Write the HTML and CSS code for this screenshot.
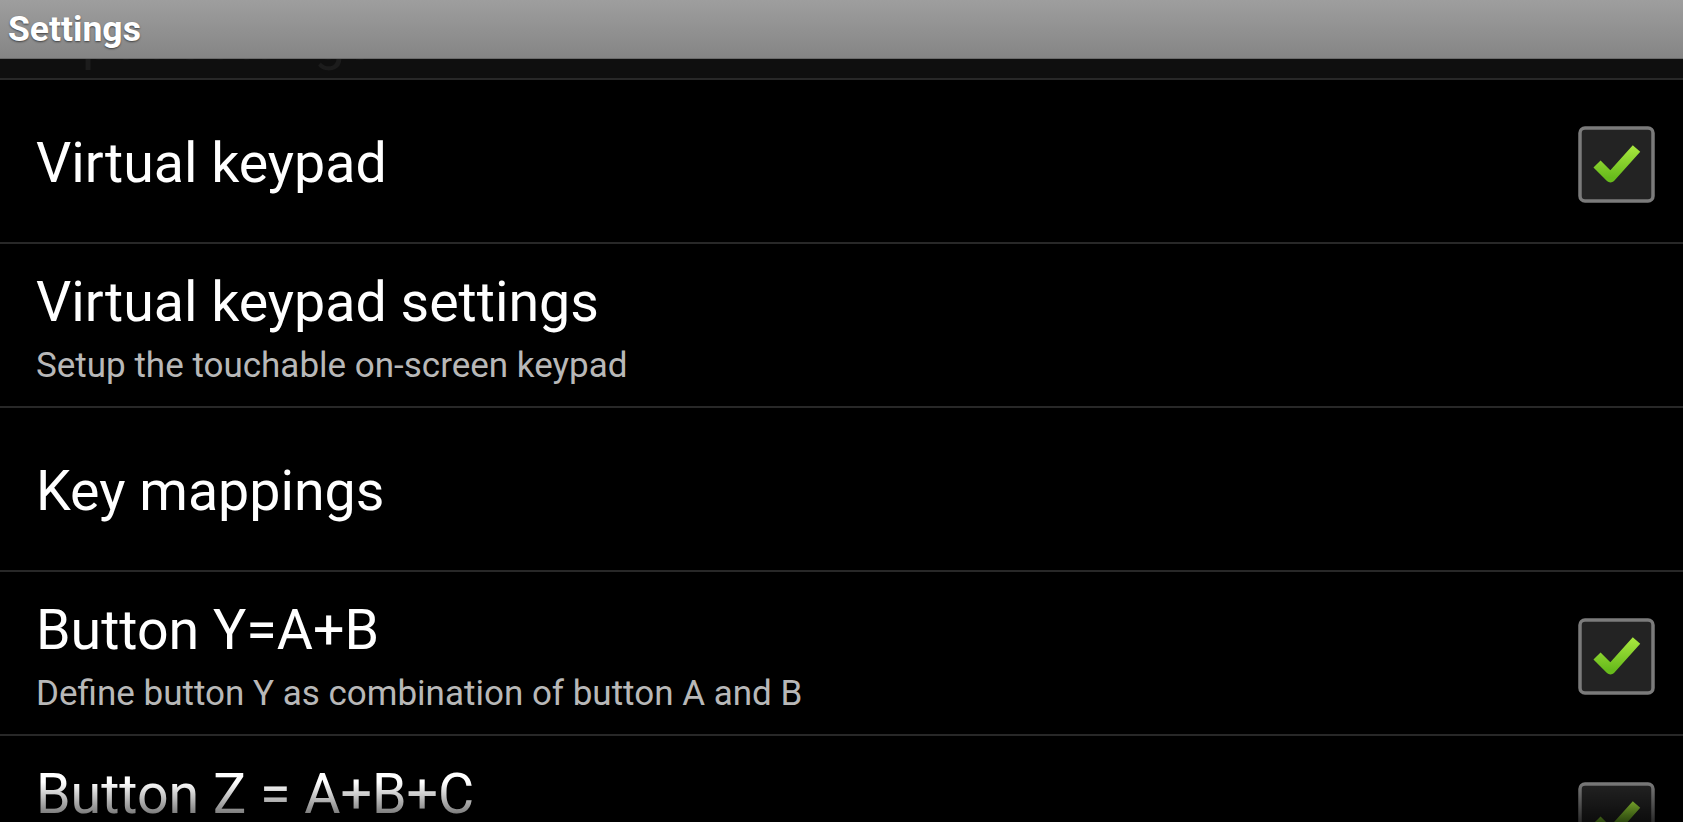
FILE: index.html
```html
<!DOCTYPE html>
<html lang="en">
<head>
    <meta charset="UTF-8">
    <meta name="viewport" content="width=device-width, initial-scale=1.0">
    <title>Settings</title>
    <link rel="stylesheet" href="styles.css">
</head>
<body>
    <header class="titlebar">Settings</header>
    <div class="list">
        <!-- previous item, scrolled almost out of view -->
        <div class="row row-cut">
            <span class="cut-text">Input settings</span>
        </div>
        <div class="row">
            <div class="text">
                <div class="title">Virtual keypad</div>
            </div>
            <svg class="check" width="77" height="77" viewBox="0 0 77 77">
                <defs>
                    <linearGradient id="g1" x1="0" y1="0" x2="0" y2="1">
                        <stop offset="0" stop-color="#a4e43c"/>
                        <stop offset="1" stop-color="#68bb1c"/>
                    </linearGradient>
                </defs>
                <rect x="2" y="2" width="73" height="73" rx="5" fill="#232323" stroke="#7b7b7b" stroke-width="3.5"/>
                <polyline points="19,38 32.5,51.5 58.5,22.5" fill="none" stroke="url(#g1)" stroke-width="10" stroke-linejoin="round"/>
            </svg>
        </div>
        <div class="row">
            <div class="text">
                <div class="title">Virtual keypad settings</div>
                <div class="summary">Setup the touchable on-screen keypad</div>
            </div>
        </div>
        <div class="row">
            <div class="text">
                <div class="title">Key mappings</div>
            </div>
        </div>
        <div class="row">
            <div class="text">
                <div class="title">Button Y=A+B</div>
                <div class="summary">Define button Y as combination of button A and B</div>
            </div>
            <svg class="check" width="77" height="77" viewBox="0 0 77 77">
                <rect x="2" y="2" width="73" height="73" rx="5" fill="#232323" stroke="#7b7b7b" stroke-width="3.5"/>
                <polyline points="19,38 32.5,51.5 58.5,22.5" fill="none" stroke="url(#g1)" stroke-width="10" stroke-linejoin="round"/>
            </svg>
        </div>
        <div class="row">
            <div class="text">
                <div class="title">Button Z = A+B+C</div>
                <div class="summary">Define button Z as combination of button A, B and C</div>
            </div>
            <svg class="check" width="77" height="77" viewBox="0 0 77 77">
                <rect x="2" y="2" width="73" height="73" rx="5" fill="#232323" stroke="#7b7b7b" stroke-width="3.5"/>
                <polyline points="19,38 32.5,51.5 58.5,22.5" fill="none" stroke="url(#g1)" stroke-width="10" stroke-linejoin="round"/>
            </svg>
        </div>
    </div>
</body>
</html>
```

FILE: styles.css
```css
*{
    padding: 0;
    margin: 0;
    box-sizing: border-box;
}
html, body{
    height: 100%;
    overflow: hidden;
}
body{
    background-color: #000;
    font-family: Roboto, "Noto Sans", sans-serif;
    color: #fff;
}
.titlebar{
    height: 59px;
    display: flex;
    align-items: center;
    padding-left: 8px;
    font-size: 35.5px;
    font-weight: 700;
    color: #fff;
    text-shadow: 0 1px 2px rgba(0,0,0,0.55);
    background: linear-gradient(#9e9e9e, #858585);
    border-bottom: 1px solid #6a6a6a;
}
.list{
    position: relative;
    height: 763px;
    overflow: hidden;
}
.list::after{
    content: "";
    position: absolute;
    left: 0;
    right: 0;
    bottom: 0;
    height: 40px;
    background: linear-gradient(rgba(0,0,0,0), rgba(0,0,0,0.65));
}
.row{
    height: 164px;
    display: flex;
    align-items: center;
    padding: 6px 28px 0 36px;
    border-bottom: 2px solid #282828;
}
.row-cut{
    height: 21px;
    padding-top: 0;
    align-items: flex-end;
    overflow: hidden;
    background-color: #0f0f0f;
}
.cut-text{
    font-size: 55.5px;
    line-height: 64px;
    margin-bottom: 5px;
    color: #1c1c1c;
}
.text{
    flex: 1;
}
.title{
    font-size: 55.5px;
    line-height: 64px;
}
.summary{
    font-size: 35px;
    line-height: 40px;
    margin-top: 11px;
    color: #b8b8b8;
}
.check{
    flex-shrink: 0;
    display: block;
}
```
